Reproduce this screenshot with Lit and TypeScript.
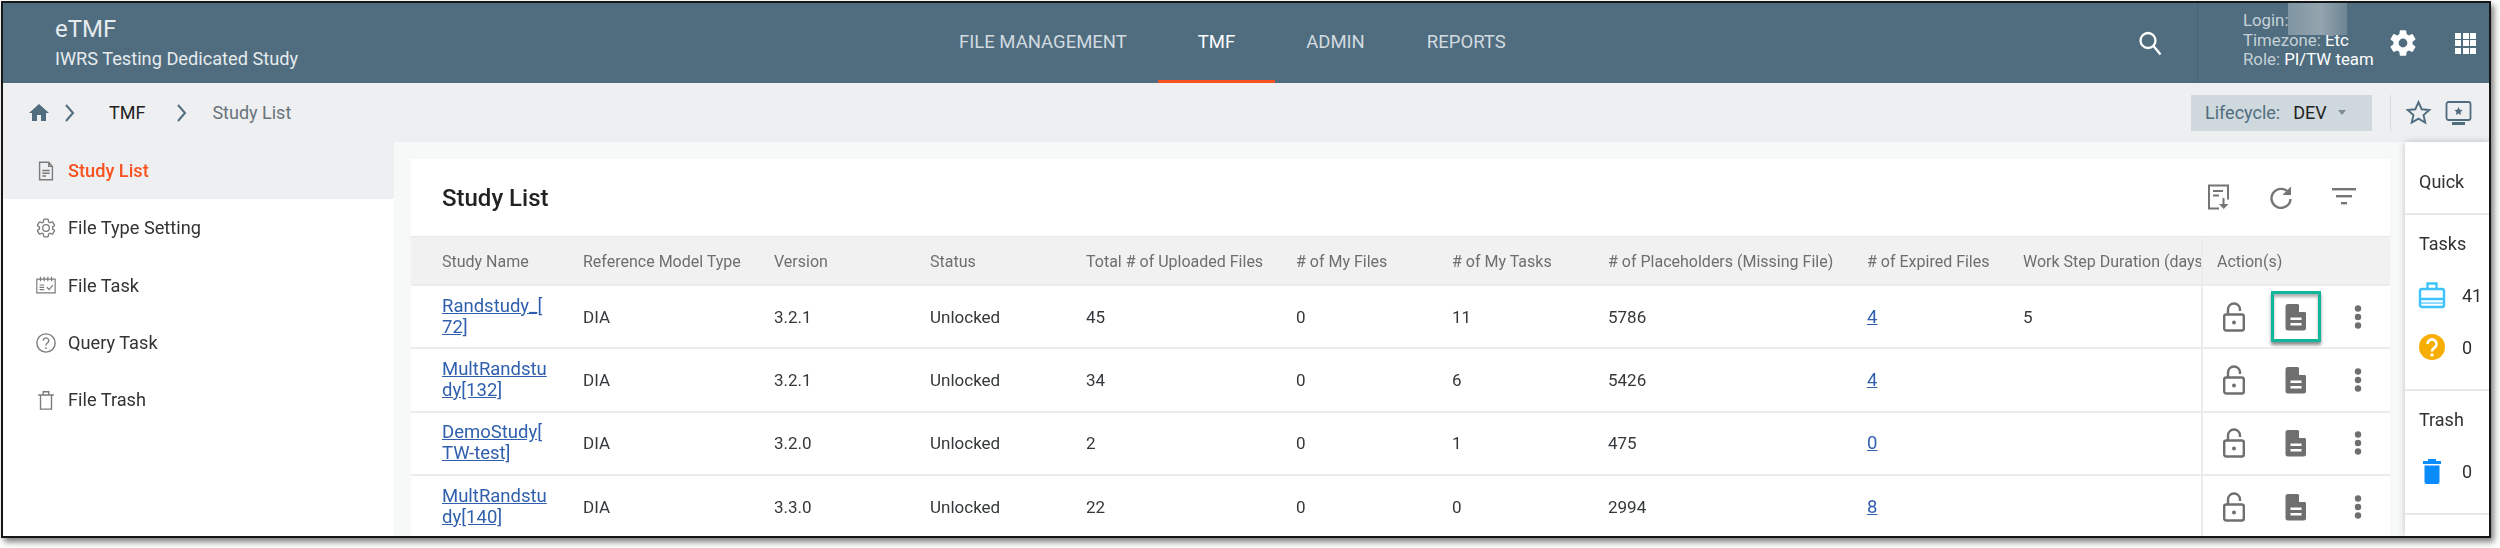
import { LitElement, html, css, svg } from "lit";
import { customElement } from "lit/decorators.js";

const GEAR =
  "M19.14 12.94c.04-.3.06-.61.06-.94 0-.32-.02-.64-.07-.94l2.03-1.58a.49.49 0 0 0 .12-.61l-1.92-3.32a.488.488 0 0 0-.59-.22l-2.39.96c-.5-.38-1.03-.7-1.62-.94l-.36-2.54a.484.484 0 0 0-.48-.41h-3.84c-.24 0-.43.17-.47.41l-.36 2.54c-.59.24-1.13.57-1.62.94l-2.39-.96c-.22-.08-.47 0-.59.22L2.74 8.87c-.12.21-.08.47.12.61l2.03 1.58c-.05.3-.09.63-.09.94s.02.64.07.94l-2.03 1.58a.49.49 0 0 0-.12.61l1.92 3.32c.12.22.37.29.59.22l2.39-.96c.5.38 1.03.7 1.62.94l.36 2.54c.05.24.24.41.48.41h3.84c.24 0 .44-.17.47-.41l.36-2.54c.59-.24 1.13-.56 1.62-.94l2.39.96c.22.08.47 0 .59-.22l1.92-3.32c.12-.22.07-.47-.12-.61l-2.01-1.58z";

// thin outlined icons, drawn on a 24 box
const ICONS: Record<string, unknown> = {
  fileLine: svg`<path d="M5 2.5h10l4 4.5v14.5H5z M15 2.5V7h4 M8 11.5h8 M8 14.5h8 M8 17.5h4" fill="none" stroke="currentColor" stroke-width="1.5"/>`,
  gearLine: svg`<path d="${GEAR}" fill="none" stroke="currentColor" stroke-width="1.4"/><circle cx="12" cy="12" r="3.6" fill="none" stroke="currentColor" stroke-width="1.4"/>`,
  calendar: svg`<path d="M2 5.5h20v15H2z M6 3v5 M10 3v5 M14 3v5 M18 3v5 M5 12h5 M5 14.5h5 M5 17h5 M13 14.5l2.5 2.5 4-5" fill="none" stroke="currentColor" stroke-width="1.3"/>`,
  help: svg`<circle cx="12" cy="12" r="10" fill="none" stroke="currentColor" stroke-width="1.5"/><path d="M9 9.5a3 3 0 1 1 4.6 2.5c-1 .7-1.6 1.2-1.6 2.6 M12 16.5v2" fill="none" stroke="currentColor" stroke-width="1.5"/>`,
  trash: svg`<path d="M6 7v15h12V7 M3.5 6.5h17 M9 6.5V3h6v3.5" fill="none" stroke="currentColor" stroke-width="1.5"/>`,
};

const NAV = [
  { label: "FILE MANAGEMENT" },
  { label: "TMF", active: true },
  { label: "ADMIN" },
  { label: "REPORTS" },
];

const SIDE = [
  { label: "Study List", icon: "fileLine", active: true },
  { label: "File Type Setting", icon: "gearLine" },
  { label: "File Task", icon: "calendar" },
  { label: "Query Task", icon: "help" },
  { label: "File Trash", icon: "trash" },
];

const COLS = [
  "Study Name",
  "Reference Model Type",
  "Version",
  "Status",
  "Total # of Uploaded Files",
  "# of My Files",
  "# of My Tasks",
  "# of Placeholders (Missing File)",
  "# of Expired Files",
  "Work Step Duration (days)",
];
const WIDTHS = [172, 191, 156, 156, 210, 156, 156, 259, 156, 179, 188];

const ROWS = [
  { name: "Randstudy_[72]", ver: "3.2.1", total: "45", mine: "0", tasks: "11", holders: "5786", expired: "4", step: "5" },
  { name: "MultRandstudy[132]", ver: "3.2.1", total: "34", mine: "0", tasks: "6", holders: "5426", expired: "4", step: "" },
  { name: "DemoStudy[TW-test]", ver: "3.2.0", total: "2", mine: "0", tasks: "1", holders: "475", expired: "0", step: "" },
  { name: "MultRandstudy[140]", ver: "3.3.0", total: "22", mine: "0", tasks: "0", holders: "2994", expired: "8", step: "" },
];

@customElement("app-root")
export class AppRoot extends LitElement {
  static styles = css`
    :host {
      display: block;
      width: 2500px;
      height: 548px;
      background: #fff;
      overflow: hidden;
      font-family: Roboto, "Liberation Sans", sans-serif;
      color: #2f3133;
    }
    svg {
      display: block;
      flex: none;
    }
    .window {
      box-sizing: border-box;
      margin: 1px 0 0 1px;
      width: 2490px;
      height: 537px;
      border: 2px solid #161616;
      box-shadow: 3px 4px 6px rgba(0, 0, 0, 0.5);
      display: flex;
      flex-direction: column;
      overflow: hidden;
      background: #fff;
      filter: blur(0.4px);
    }

    /* top bar */
    .top {
      height: 80px;
      flex: none;
      background: #4f6d7f;
      color: #fff;
      display: flex;
      align-items: stretch;
    }
    .brand {
      width: 925px;
      box-sizing: border-box;
      padding-left: 52px;
      display: flex;
      flex-direction: column;
    }
    .brand-name {
      font-size: 24px;
      line-height: 28px;
      margin-top: 12px;
      color: #e6ebee;
    }
    .brand-sub {
      font-size: 18.2px;
      line-height: 24px;
      margin-top: 4px;
      color: #e6ebee;
    }
    .nav {
      display: flex;
      width: 1196px;
    }
    .tab {
      padding: 0 31px;
      font-size: 18.5px;
      line-height: 78px;
      color: #d3dbe0;
      height: 80px;
      box-sizing: border-box;
    }
    .tab.active {
      padding: 0 40px;
      color: #fff;
      border-bottom: 3px solid #f9521f;
    }
    .search {
      width: 73px;
      box-sizing: border-box;
      padding-right: 21px;
      display: flex;
      align-items: center;
      justify-content: center;
      color: #fff;
    }
    .user {
      position: relative;
      width: 190px;
      box-sizing: border-box;
      border-left: 1px solid #476375;
      padding: 8px 0 0 45px;
      font-size: 16.8px;
      line-height: 19.7px;
      color: #c6d1d8;
      white-space: nowrap;
    }
    .user b {
      font-weight: 400;
      color: #fff;
    }
    .mask {
      position: absolute;
      left: 90px;
      top: 0;
      width: 59px;
      height: 32px;
      background: linear-gradient(90deg, #7f95a1, #93a4ae 55%, #6d8594);
    }
    .gear {
      width: 46px;
      display: flex;
      align-items: center;
      color: #fff;
    }
    .apps {
      display: grid;
      grid-template-columns: repeat(3, 6px);
      grid-auto-rows: 6px;
      gap: 1.5px;
      align-self: center;
      margin-left: 22px;
    }
    .apps i {
      background: #fff;
    }

    /* breadcrumb */
    .crumbs {
      height: 59px;
      flex: none;
      background: #eeeff1;
      display: flex;
      align-items: center;
      font-size: 18px;
      color: #222;
    }
    .home {
      margin-left: 24px;
      color: #4f6d7f;
    }
    .chev {
      color: #4f6d7f;
    }
    .crumb-a {
      margin: 0 30px 0 33px;
    }
    .crumb-b {
      margin-left: 24px;
      color: #69747b;
    }
    .life {
      margin-left: auto;
      width: 181px;
      height: 36px;
      background: #cfd9dd;
      display: flex;
      align-items: center;
      padding-left: 14px;
      box-sizing: border-box;
      color: #4f6d7f;
    }
    .life b {
      font-weight: 400;
      color: #222;
      margin-left: 13px;
    }
    .caret {
      margin-left: 11px;
      width: 0;
      height: 0;
      border: 4.5px solid transparent;
      border-top: 5px solid #7d8c95;
      border-bottom: 0;
    }
    .crumb-tools {
      margin-left: 18px;
      width: 99px;
      height: 36px;
      box-sizing: border-box;
      border-left: 1px solid #d5dadd;
      display: flex;
      align-items: center;
      gap: 13px;
      padding-left: 14px;
      color: #4f6d7f;
    }

    /* body */
    .body {
      flex: 1;
      min-height: 0;
      display: flex;
    }
    .side {
      width: 391px;
      flex: none;
      background: #fff;
    }
    .side-item {
      height: 57.3px;
      display: flex;
      align-items: center;
      gap: 11px;
      padding-left: 32px;
      font-size: 18.2px;
      color: #333;
    }
    .side-item svg {
      color: #7b7b7b;
    }
    .side-item.active {
      background: #eeeff1;
      color: #f9521f;
      font-weight: 500;
    }
    .main {
      flex: 1;
      min-width: 0;
      background: #f7f8f8;
      padding: 17px 15px 0 17px;
      display: flex;
    }
    .card {
      width: 1979px;
      flex: none;
      background: #fff;
    }
    .card-head {
      display: flex;
      align-items: center;
      padding-left: 31px;
      border-bottom: 1px solid #e8e8e8;
      box-sizing: border-box;
      height: 78px;
    }
    h2 {
      margin: 0;
      font-size: 24px;
      font-weight: 500;
      color: #222;
    }
    .tools {
      margin-left: auto;
      display: flex;
      align-items: center;
      gap: 39px;
      padding: 0 34px 2px 0;
      color: #757575;
    }
    table {
      border-collapse: collapse;
      table-layout: fixed;
      width: 1979px;
      font-size: 17px;
    }
    th {
      height: 48px;
      background: #f1f1f1;
      color: #6c6e70;
      font-size: 16px;
      font-weight: 400;
      text-align: left;
      padding: 2px 0 0;
      box-sizing: border-box;
      white-space: nowrap;
      overflow: hidden;
    }
    td {
      height: 61.3px;
      padding: 0;
      border-top: 2px solid #ececec;
      color: #35383a;
    }
    th:first-child,
    td:first-child {
      padding-left: 31px;
    }
    td:first-child {
      padding-right: 34px;
      line-height: 21px;
      line-break: anywhere;
    }
    .action-col {
      border-left: 2px solid #ececec;
      padding-left: 14px;
    }
    a {
      font-size: 18.5px;
      color: #2f5fad;
      text-decoration: underline;
    }
    .actions {
      display: flex;
      gap: 12px;
      margin-left: -8px;
      color: #6f6f6f;
    }
    .act {
      box-sizing: border-box;
      width: 50px;
      height: 51px;
      display: flex;
      align-items: center;
      justify-content: center;
    }
    .act.focus {
      border: 3px solid #12b79b;
      box-shadow: 0 3px 3px rgba(0, 0, 0, 0.45), inset 0 3px 3px rgba(0, 0, 0, 0.3);
    }

    /* quick panel */
    .panel {
      width: 84px;
      flex: none;
      background: #fff;
      box-shadow: 0 0 7px rgba(0, 0, 0, 0.22);
      font-size: 18px;
      color: #2f3133;
      position: relative;
      overflow: hidden;
    }
    .sec {
      border-bottom: 2px solid #e8e8e8;
      padding: 12px 0 16px 14px;
    }
    .sec.quick {
      height: 73px;
      box-sizing: border-box;
      padding: 28px 0 0 14px;
    }
    .sec-title {
      line-height: 34px;
      margin-bottom: 8px;
    }
    .quick .sec-title {
      line-height: 24px;
      margin-bottom: 0;
    }
    .stat {
      height: 52px;
      display: flex;
      align-items: center;
      gap: 16px;
      margin-left: -1px;
    }
  `;

  private icon(name: string) {
    return html`<svg width="22" height="24" viewBox="0 0 24 24">${ICONS[name]}</svg>`;
  }

  private lockIcon() {
    return html`<svg width="24" height="30" viewBox="0 0 24 30" fill="none" stroke="currentColor" stroke-width="2.4">
      <rect x="2.2" y="12.5" width="19.6" height="16" rx="2" />
      <path d="M6 12.5V7.5a6 6 0 0 1 12 0v1.5" />
      <circle cx="12" cy="20.5" r="2" fill="currentColor" stroke="none" />
    </svg>`;
  }

  private docIcon() {
    return html`<svg width="24" height="28" viewBox="0 0 24 28">
      <path
        fill="currentColor"
        fill-rule="evenodd"
        d="M4 1h10l8 9v15a2.500 2.500 0 0 1-2.500 2.500h-15.500A2.500 2.500 0 0 1 1.500 25V3.500A2.500 2.500 0 0 1 4 1zM6.500 14.500v2.500h11v-2.500zM6.500 20v2.500h11V20z"
      />
      <path d="M15 1.500v7.500h6.500z" fill="#fff" />
    </svg>`;
  }

  private moreIcon() {
    return html`<svg width="8" height="28" viewBox="0 0 8 28" fill="currentColor">
      <circle cx="4" cy="5.500" r="3.200" />
      <circle cx="4" cy="14" r="3.200" />
      <circle cx="4" cy="22.500" r="3.200" />
    </svg>`;
  }

  render() {
    return html`
      <div class="window">
        <header class="top">
          <div class="brand">
            <div class="brand-name">eTMF</div>
            <div class="brand-sub">IWRS Testing Dedicated Study</div>
          </div>
          <nav class="nav">
            ${NAV.map((n) => html`<div class="tab ${n.active ? "active" : ""}">${n.label}</div>`)}
          </nav>
          <div class="search">
            <svg width="27" height="27" viewBox="0 0 27 27" fill="none" stroke="currentColor" stroke-width="2.300">
              <circle cx="11" cy="10.500" r="7.500" />
              <path d="M16.500 16l7 8.500" />
            </svg>
          </div>
          <div class="user">
            Login:<br />
            Timezone: <b>Etc</b><br />
            Role: <b>PI/TW team</b>
            <div class="mask"></div>
          </div>
          <div class="gear">
            <svg width="32" height="32" viewBox="0 0 24 24" fill="currentColor"><path d="${GEAR}" /><circle cx="12" cy="12" r="3.300" fill="#4f6d7f" /></svg>
          </div>
          <div class="apps">${Array.from({ length: 9 }, () => html`<i></i>`)}</div>
        </header>

        <div class="crumbs">
          <svg class="home" width="24" height="24" viewBox="0 0 24 24" fill="currentColor"><path d="M10 20v-6h4v6h5v-8h3L12 3 2 12h3v8z" /></svg>
          ${this.chevron(12)}
          <span class="crumb-a">TMF</span>
          ${this.chevron(0)}
          <span class="crumb-b">Study List</span>
          <div class="life">Lifecycle: <b>DEV</b><span class="caret"></span></div>
          <div class="crumb-tools">
            <svg width="27" height="27" viewBox="0 0 24 24" fill="none" stroke="currentColor" stroke-width="1.700"><path d="M12 2.800l2.800 6.300 6.800.7-5.100 4.500 1.500 6.700-6-3.500-6 3.500 1.500-6.700-5.100-4.500 6.800-.7z" /></svg>
            <svg width="27" height="24" viewBox="0 0 27 24" fill="none" stroke="currentColor" stroke-width="1.800">
              <rect x="1.500" y="1" width="24" height="18" rx="2" />
              <path d="M7 22.500h13" stroke-width="3" />
              <path d="M13.500 6l1.300 2.700 2.900.3-2.200 2 .6 2.900-2.600-1.500-2.600 1.500.6-2.900-2.200-2 2.900-.3z" fill="currentColor" stroke="none" />
            </svg>
          </div>
        </div>

        <div class="body">
          <aside class="side">
            ${SIDE.map(
              (s) => html`<div class="side-item ${s.active ? "active" : ""}">${this.icon(s.icon)}<span>${s.label}</span></div>`
            )}
          </aside>
          <main class="main">
            <section class="card">
              <div class="card-head">
                <h2>Study List</h2>
                <div class="tools">
                  <svg width="23" height="26" viewBox="0 0 23 26" fill="none" stroke="currentColor" stroke-width="2">
                    <path d="M12 24.500H2V1.500h19v14" />
                    <path d="M6 7h10M6 11.500h6M16.500 14v8" />
                    <path d="M12 20h9.500l-4.750 5z" fill="currentColor" stroke="none" />
                  </svg>
                  <svg width="24" height="24" viewBox="0 0 24 24" fill="none" stroke="currentColor" stroke-width="2.400">
                    <path d="M19.500 7.500A9.500 9.500 0 1 0 21.500 14" />
                    <path d="M22 1.500v8.500h-8.500z" fill="currentColor" stroke="none" />
                  </svg>
                  <svg width="24" height="18" viewBox="0 0 24 18" fill="currentColor">
                    <rect x="0" y="0" width="24" height="2.400" />
                    <rect x="4" y="7" width="16" height="2.400" />
                    <rect x="9" y="14" width="6" height="2.400" />
                  </svg>
                </div>
              </div>
              <table>
                <colgroup>${WIDTHS.map((w) => html`<col style="width:${w}px" />`)}</colgroup>
                <thead>
                  <tr>
                    ${COLS.map((c) => html`<th>${c}</th>`)}
                    <th class="action-col">Action(s)</th>
                  </tr>
                </thead>
                <tbody>
                  ${ROWS.map(
                    (r, i) => html`<tr>
                      <td><a>${r.name}</a></td>
                      <td>DIA</td>
                      <td>${r.ver}</td>
                      <td>Unlocked</td>
                      <td>${r.total}</td>
                      <td>${r.mine}</td>
                      <td>${r.tasks}</td>
                      <td>${r.holders}</td>
                      <td><a>${r.expired}</a></td>
                      <td>${r.step}</td>
                      <td class="action-col">
                        <div class="actions">
                          <div class="act">${this.lockIcon()}</div>
                          <div class="act ${i === 0 ? "focus" : ""}">${this.docIcon()}</div>
                          <div class="act">${this.moreIcon()}</div>
                        </div>
                      </td>
                    </tr>`
                  )}
                </tbody>
              </table>
            </section>
          </main>
          <aside class="panel">
            <div class="sec quick"><div class="sec-title">Quick</div></div>
            <div class="sec">
              <div class="sec-title">Tasks</div>
              <div class="stat">
                <svg width="28" height="28" viewBox="0 0 28 28" fill="none" stroke="#3cc3fb" stroke-width="2.400">
                  <rect x="2" y="8" width="24" height="18" rx="2" />
                  <path d="M9.500 8V2.500h9V8M2 18h24" />
                  <path d="M2 22h24" stroke-width="1.200" />
                </svg>
                <span>41</span>
              </div>
              <div class="stat">
                <svg width="28" height="28" viewBox="0 0 28 28">
                  <circle cx="14" cy="14" r="13" fill="#f8ae00" />
                  <path d="M9.500 11a4.500 4.500 0 1 1 7 3.700c-1.600 1.100-2.500 1.800-2.500 3.800" fill="none" stroke="#fff" stroke-width="2.600" />
                  <circle cx="14" cy="22" r="1.700" fill="#fff" />
                </svg>
                <span>0</span>
              </div>
            </div>
            <div class="sec">
              <div class="sec-title">Trash</div>
              <div class="stat">
                <svg width="28" height="28" viewBox="0 0 28 28" fill="#0a8cff">
                  <path d="M5 4h18v3H5zM10 2h8v2h-8z" />
                  <path d="M6.500 8.500h15V25a2 2 0 0 1-2 2h-11a2 2 0 0 1-2-2z" />
                </svg>
                <span>0</span>
              </div>
            </div>
          </aside>
        </div>
      </div>
    `;
  }

  private chevron(left: number) {
    return html`<svg class="chev" style="margin-left:${left}px" width="13" height="20" viewBox="0 0 13 20" fill="none" stroke="currentColor" stroke-width="2">
      <path d="M3 2l7 8-7 8" />
    </svg>`;
  }
}
